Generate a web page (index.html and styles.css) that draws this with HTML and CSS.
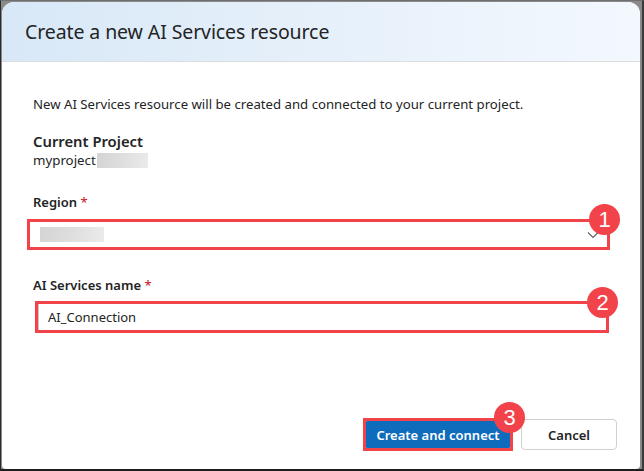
FILE: index.html
```html
<!DOCTYPE html>
<html>
<head>
<meta charset="utf-8">
<link rel="stylesheet" href="styles.css">
</head>
<body>
<div class="frame">
  <div class="dialog">
    <div class="header">
      <h1 class="title">Create a new AI Services resource</h1>
    </div>
    <div class="content">
      <p class="desc">New AI Services resource will be created and connected to your current project.</p>
      <div class="project">
        <div class="project-label">Current Project</div>
        <div class="project-name">myproject<span class="blur blur-name"></span></div>
      </div>
      <div class="label region-label">Region <span class="req">*</span></div>
      <div class="annot annot-region">
        <div class="select">
          <span class="blur blur-region"></span>
          <svg class="chev" width="12" height="8" viewBox="0 0 12 8"><path d="M1 1.5 L6 6.5 L11 1.5" fill="none" stroke="#616161" stroke-width="1.1"/></svg>
        </div>
        <span class="badge badge-1">1</span>
      </div>
      <div class="label name-label">AI Services name <span class="req">*</span></div>
      <div class="annot annot-name">
        <div class="input">AI_Connection</div>
        <span class="badge badge-2">2</span>
      </div>
      <div class="actions">
        <div class="annot annot-btn">
          <button class="btn primary">Create and connect</button>
          <span class="badge badge-3">3</span>
        </div>
        <button class="btn secondary">Cancel</button>
      </div>
    </div>
  </div>
</div>
</body>
</html>
```

FILE: styles.css
```css
* { box-sizing: border-box; }
html, body { margin: 0; padding: 0; }
body {
  width: 644px;
  height: 471px;
  background: #1e1e1e;
  font-family: "Noto Sans", "Open Sans", sans-serif;
  color: #242424;
}
.frame {
  width: 644px;
  height: 471px;
  background: #8a8a8a;
  border-left: 1px solid #2a2a2a;
  border-bottom: 2px solid #1e1e1e;
  border-right: 2px solid #3a3a3a;
  border-top: 1px solid #6f6f6f;
  padding: 1px 2px 0 1px;
}
.dialog {
  width: 100%;
  height: 100%;
  background: #fff;
  border-radius: 12px 12px 4px 4px;
  overflow: hidden;
  display: flex;
  flex-direction: column;
}
.header {
  height: 60px;
  flex: none;
  background: linear-gradient(90deg, #d8e8f7 0%, #e6f0fa 50%, #f3f8fe 100%);
  border-bottom: 1px solid #dcdcdc;
  display: flex;
  align-items: center;
  padding-left: 23px;
}
.title {
  margin: 0;
  font-size: 19.5px;
  font-weight: 400;
  color: #242424;
  letter-spacing: -0.1px;
}
.content {
  flex: 1;
  padding: 0 0 0 31px;
  display: flex;
  flex-direction: column;
  position: relative;
}
.desc {
  margin: 33px 0 0;
  font-size: 13.2px;
  line-height: 18px;
  color: #242424;
}
.project { margin-top: 19px; }
.project-label {
  font-size: 14.8px;
  font-weight: 600;
  line-height: 19px;
}
.project-name {
  font-size: 13.3px;
  line-height: 17px;
  margin-top: 1px;
  display: flex;
  align-items: center;
}
.blur {
  display: inline-block;
  background: linear-gradient(100deg, #d4d4d4 0%, #dedede 50%, #ebebeb 100%);
}
.blur-name { width: 51px; height: 15px; margin-left: 1px; }
.label {
  font-size: 13px;
  font-weight: 600;
  line-height: 17px;
}
.req { color: #c50f1f; font-weight: 400; }
.region-label { margin-top: 25px; }
.annot {
  border: 3px solid #f2434a;
  position: relative;
}
.annot-region {
  margin-left: -6px;
  width: 583px;
  height: 31px;
  margin-top: 8px;
}
.select {
  height: 100%;
  display: flex;
  align-items: center;
  padding-left: 10px;
  position: relative;
}
.blur-region { width: 64px; height: 15px; }
.chev { position: absolute; left: 557px; top: 9px; }
.name-label { margin-top: 27px; }
.annot-name {
  margin-left: 2px;
  width: 574px;
  height: 32px;
  margin-top: 7px;
}
.input {
  height: 100%;
  border-left: 1px solid #c8c8c8;
  display: flex;
  align-items: center;
  padding-left: 9px;
  font-size: 13px;
  color: #242424;
}
.badge {
  position: absolute;
  width: 31px;
  height: 31px;
  border-radius: 50%;
  background: #f2434a;
  color: #fff;
  font-family: "Liberation Sans", Arial, sans-serif;
  font-size: 22px;
  line-height: 31px;
  text-align: center;
}
.badge-1 { left: 559px; top: -18px; }
.badge-2 { left: 549px; top: -17px; }
.badge-3 { left: 128px; top: -19px; }
.actions {
  margin-top: auto;
  margin-bottom: 18px;
  display: flex;
  align-items: center;
  padding-left: 330px;
  gap: 8px;
}
.annot-btn {
  width: 150px;
  height: 33px;
  padding: 0;
  display: flex;
}
.btn {
  font-family: "Noto Sans", "Open Sans", sans-serif;
  font-size: 13px;
  font-weight: 600;
  border-radius: 4px;
  cursor: pointer;
}
.primary {
  flex: 1;
  background: #0f6cbd;
  color: #fff;
  border: none;
  border-radius: 1px;
}
.secondary {
  width: 96px;
  height: 31px;
  background: #fff;
  color: #242424;
  border: 1px solid #d1d1d1;
  font-weight: 600;
}
```
